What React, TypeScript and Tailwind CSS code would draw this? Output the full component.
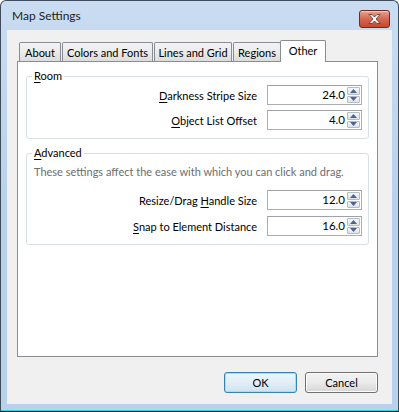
import type { ReactNode } from "react";

const FONT = "font-['Lato','Noto_Sans',sans-serif]";

const TABS = [
  { label: "About", width: "w-[42px]" },
  { label: "Colors and Fonts", width: "w-[91px]" },
  { label: "Lines and Grid", width: "w-[78px]" },
  { label: "Regions", width: "w-[48px]" },
];

// Win7 style underline for the access key
function Mnemonic({ text, index = 0 }: { text: string; index?: number }) {
  return (
    <>
      {text.slice(0, index)}
      <span className="underline underline-offset-2">{text[index]}</span>
      {text.slice(index + 1)}
    </>
  );
}

function SpinArrow({ up }: { up?: boolean }) {
  return (
    <svg aria-hidden="true" width="7" height="4" viewBox="0 0 7 4">
      <polygon points={up ? "3.5,0 7,4 0,4" : "0,0 7,0 3.5,4"} fill="#4e6489" />
    </svg>
  );
}

function SpinBox({ value }: { value: string }) {
  return (
    <div className="flex h-[20px] w-[95px] items-stretch border border-[#abadb3] border-t-[#a0a2aa] bg-white p-px">
      <span className="flex flex-1 items-center justify-end pr-[2px] text-[11.5px] leading-none text-black">
        {value}
      </span>
      <div className="flex w-[13px] flex-col gap-px">
        <div className="flex flex-1 items-center justify-center rounded-[1px] border border-[#b6bcc6] bg-gradient-to-b from-[#f6f8fa] to-[#dde3ea]">
          <SpinArrow up />
        </div>
        <div className="flex flex-1 items-center justify-center rounded-[1px] border border-[#b6bcc6] bg-gradient-to-b from-[#f6f8fa] to-[#dde3ea]">
          <SpinArrow />
        </div>
      </div>
    </div>
  );
}

function Row({ children, value }: { children: ReactNode; value: string }) {
  return (
    <div className="flex items-center justify-end gap-[10px]">
      <span className="text-[11px] leading-none text-black">{children}</span>
      <SpinBox value={value} />
    </div>
  );
}

function Group({ title, children }: { title: ReactNode; children: ReactNode }) {
  return (
    <fieldset className="rounded-[3px] border border-[#d5dfe5] pb-[8px] pl-[6px] pr-[6px]">
      <legend className="-ml-px px-[2px] text-[11px] leading-[16px] text-black">{title}</legend>
      {children}
    </fieldset>
  );
}

function CloseButton() {
  return (
    <button
      type="button"
      aria-label="Close"
      className="flex h-[18px] w-[31px] items-center justify-center rounded-[3px] border border-[#6d2a25] bg-gradient-to-b from-[#e6a38f] via-[#d4664f] to-[#c24a30] shadow-[inset_0_1px_0_rgba(255,255,255,0.45)]"
    >
      <svg aria-hidden="true" width="13" height="10" viewBox="0 0 13 10">
        <polygon
          points="1,0.5 4,0.5 6.5,3 9,0.5 12,0.5 8,5 12,9.5 9,9.5 6.5,7 4,9.5 1,9.5 5,5"
          fill="#ffffff"
          stroke="#6b3b36"
          strokeWidth="0.9"
          strokeLinejoin="round"
        />
      </svg>
    </button>
  );
}

export default function App() {
  return (
    <div className={`h-[412px] w-[399px] bg-white ${FONT}`}>
      <div className="flex h-full flex-col rounded-t-[6px] border border-[#3e4d5e] border-b-[#111] bg-gradient-to-b from-[#c9dcf1] via-[#b9d1ea] to-[#b9d1ea] px-[6px] shadow-[inset_0_-1px_0_#36d0f0]">
        {/* title bar */}
        <div className="flex h-[29px] shrink-0 items-center justify-between pl-[5px] pr-[2px] pt-[1px]">
          <span className="text-[12px] leading-none text-[#1e1e1e]">Map Settings</span>
          <div className="-mt-[1px] self-start pt-[9px]">
            <CloseButton />
          </div>
        </div>

        {/* client area */}
        <div className="flex h-[374px] shrink-0 flex-col bg-[#f0f0f0] pl-[10px] pt-[10px]">
          {/* tab strip */}
          <div className="relative z-10 flex h-[21px] items-end">
            <div className="ml-[2px] flex items-end gap-px">
              {TABS.map((tab) => (
                <div
                  key={tab.label}
                  className={`flex h-[19px] ${tab.width} items-center justify-center whitespace-nowrap rounded-t-[2px] border border-b-0 border-[#898c95] bg-gradient-to-b from-[#f3f3f3] via-[#ebebeb] to-[#dcdcdc] text-[11px] leading-none text-black`}
                >
                  {tab.label}
                </div>
              ))}
            </div>
            <div className="-mb-px -ml-px flex h-[22px] w-[46px] items-start justify-center rounded-t-[2px] border border-b-0 border-[#898c95] bg-white pt-[4px] text-[11px] leading-none text-black">
              Other
            </div>
          </div>

          {/* tab panel */}
          <div className="flex h-[296px] w-[361px] flex-col gap-[6px] border border-[#898c95] bg-white px-[8px] pt-[6px]">
            <Group title={<Mnemonic text="Room" />}>
              <div className="flex flex-col gap-[5px] pt-[1px]">
                <Row value="24.0">
                  <Mnemonic text="Darkness Stripe Size" />
                </Row>
                <Row value="4.0">
                  <Mnemonic text="Object List Offset" />
                </Row>
              </div>
            </Group>

            <Group title={<Mnemonic text="Advanced" />}>
              <p className="whitespace-nowrap pl-px pt-[3px] text-[11px] leading-[16px] text-[#6d6d6d]">
                These settings affect the ease with which you can click and drag.
              </p>
              <div className="mt-[10px] flex flex-col gap-[6px]">
                <Row value="12.0">
                  Resize/Drag <Mnemonic text="Handle Size" />
                </Row>
                <Row value="16.0">
                  <Mnemonic text="Snap to Element Distance" />
                </Row>
              </div>
            </Group>
          </div>

          {/* buttons */}
          <div className="mt-[15px] flex w-[361px] justify-end gap-[8px]">
            <button
              type="button"
              className="h-[21px] w-[73px] rounded-[3px] border border-[#3c7fb1] bg-gradient-to-b from-[#eaf6fd] via-[#e3eef6] to-[#cde2ef] text-[11px] leading-none text-black shadow-[inset_0_0_0_1px_#a8dcf5]"
            >
              OK
            </button>
            <button
              type="button"
              className="h-[21px] w-[73px] rounded-[3px] border border-[#707070] bg-gradient-to-b from-[#f2f2f2] via-[#ebebeb] to-[#d6d6d6] text-[11px] leading-none text-black shadow-[inset_0_0_0_1px_#fcfcfc]"
            >
              Cancel
            </button>
          </div>
        </div>
      </div>
    </div>
  );
}
